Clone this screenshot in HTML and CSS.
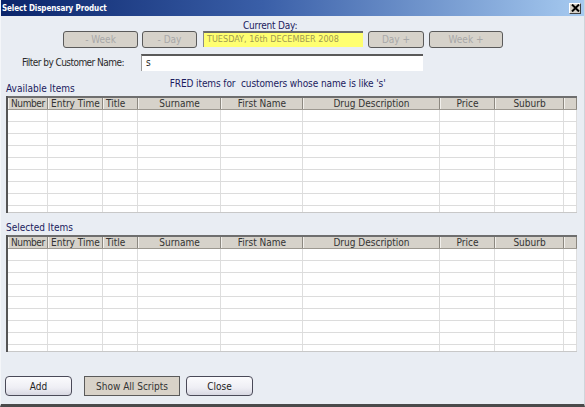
FILE: index.html
```html
<!DOCTYPE html>
<html>
<head>
<meta charset="utf-8">
<link rel="stylesheet" href="styles.css">
</head>
<body>
<div class="window">
  <div class="titlebar">
    <span class="title">Select Dispensary Product</span>
    <span class="close-btn"><svg width="9" height="8" viewBox="0 0 9 8"><path d="M1 0.5 L8 7.5 M8 0.5 L1 7.5" stroke="#000" stroke-width="2"/></svg></span>
  </div>
  <div class="content">
    <div class="day-caption">Current Day:</div>
    <div class="day-row">
      <button class="btn nav b-week-back" disabled>- Week</button>
      <button class="btn nav b-day-back" disabled>- Day</button>
      <div class="date-field">TUESDAY, 16th DECEMBER 2008</div>
      <button class="btn nav b-day-fwd" disabled>Day +</button>
      <button class="btn nav b-week-fwd" disabled>Week +</button>
    </div>
    <div class="filter-row">
      <label class="filter-label">Filter by Customer Name:</label>
      <div class="text-input">s</div>
    </div>
    <div class="info-row">
      <span class="section-label">Available Items</span>
      <span class="info-text">FRED items for &nbsp;customers whose name is like 's'</span>
    </div>
    <div class="grid">
      <div class="grid-head">
        <div class="c c1">Number</div><div class="c c2">Entry Time</div><div class="c c3">Title</div><div class="c c4">Surname</div><div class="c c5">First Name</div><div class="c c6">Drug Description</div><div class="c c7">Price</div><div class="c c8">Suburb</div><div class="c c9"></div>
      </div>
      <div class="grid-body">
        <div class="row"><div class="c c1"></div><div class="c c2"></div><div class="c c3"></div><div class="c c4"></div><div class="c c5"></div><div class="c c6"></div><div class="c c7"></div><div class="c c8"></div><div class="c c9"></div></div>
        <div class="row"><div class="c c1"></div><div class="c c2"></div><div class="c c3"></div><div class="c c4"></div><div class="c c5"></div><div class="c c6"></div><div class="c c7"></div><div class="c c8"></div><div class="c c9"></div></div>
        <div class="row"><div class="c c1"></div><div class="c c2"></div><div class="c c3"></div><div class="c c4"></div><div class="c c5"></div><div class="c c6"></div><div class="c c7"></div><div class="c c8"></div><div class="c c9"></div></div>
        <div class="row"><div class="c c1"></div><div class="c c2"></div><div class="c c3"></div><div class="c c4"></div><div class="c c5"></div><div class="c c6"></div><div class="c c7"></div><div class="c c8"></div><div class="c c9"></div></div>
        <div class="row"><div class="c c1"></div><div class="c c2"></div><div class="c c3"></div><div class="c c4"></div><div class="c c5"></div><div class="c c6"></div><div class="c c7"></div><div class="c c8"></div><div class="c c9"></div></div>
        <div class="row"><div class="c c1"></div><div class="c c2"></div><div class="c c3"></div><div class="c c4"></div><div class="c c5"></div><div class="c c6"></div><div class="c c7"></div><div class="c c8"></div><div class="c c9"></div></div>
        <div class="row"><div class="c c1"></div><div class="c c2"></div><div class="c c3"></div><div class="c c4"></div><div class="c c5"></div><div class="c c6"></div><div class="c c7"></div><div class="c c8"></div><div class="c c9"></div></div>
        <div class="row"><div class="c c1"></div><div class="c c2"></div><div class="c c3"></div><div class="c c4"></div><div class="c c5"></div><div class="c c6"></div><div class="c c7"></div><div class="c c8"></div><div class="c c9"></div></div>
        <div class="row"><div class="c c1"></div><div class="c c2"></div><div class="c c3"></div><div class="c c4"></div><div class="c c5"></div><div class="c c6"></div><div class="c c7"></div><div class="c c8"></div><div class="c c9"></div></div>
      </div>
    </div>
    <div class="section-label selected-label">Selected Items</div>
    <div class="grid">
      <div class="grid-head">
        <div class="c c1">Number</div><div class="c c2">Entry Time</div><div class="c c3">Title</div><div class="c c4">Surname</div><div class="c c5">First Name</div><div class="c c6">Drug Description</div><div class="c c7">Price</div><div class="c c8">Suburb</div><div class="c c9"></div>
      </div>
      <div class="grid-body">
        <div class="row"><div class="c c1"></div><div class="c c2"></div><div class="c c3"></div><div class="c c4"></div><div class="c c5"></div><div class="c c6"></div><div class="c c7"></div><div class="c c8"></div><div class="c c9"></div></div>
        <div class="row"><div class="c c1"></div><div class="c c2"></div><div class="c c3"></div><div class="c c4"></div><div class="c c5"></div><div class="c c6"></div><div class="c c7"></div><div class="c c8"></div><div class="c c9"></div></div>
        <div class="row"><div class="c c1"></div><div class="c c2"></div><div class="c c3"></div><div class="c c4"></div><div class="c c5"></div><div class="c c6"></div><div class="c c7"></div><div class="c c8"></div><div class="c c9"></div></div>
        <div class="row"><div class="c c1"></div><div class="c c2"></div><div class="c c3"></div><div class="c c4"></div><div class="c c5"></div><div class="c c6"></div><div class="c c7"></div><div class="c c8"></div><div class="c c9"></div></div>
        <div class="row"><div class="c c1"></div><div class="c c2"></div><div class="c c3"></div><div class="c c4"></div><div class="c c5"></div><div class="c c6"></div><div class="c c7"></div><div class="c c8"></div><div class="c c9"></div></div>
        <div class="row"><div class="c c1"></div><div class="c c2"></div><div class="c c3"></div><div class="c c4"></div><div class="c c5"></div><div class="c c6"></div><div class="c c7"></div><div class="c c8"></div><div class="c c9"></div></div>
        <div class="row"><div class="c c1"></div><div class="c c2"></div><div class="c c3"></div><div class="c c4"></div><div class="c c5"></div><div class="c c6"></div><div class="c c7"></div><div class="c c8"></div><div class="c c9"></div></div>
        <div class="row"><div class="c c1"></div><div class="c c2"></div><div class="c c3"></div><div class="c c4"></div><div class="c c5"></div><div class="c c6"></div><div class="c c7"></div><div class="c c8"></div><div class="c c9"></div></div>
        <div class="row"><div class="c c1"></div><div class="c c2"></div><div class="c c3"></div><div class="c c4"></div><div class="c c5"></div><div class="c c6"></div><div class="c c7"></div><div class="c c8"></div><div class="c c9"></div></div>
      </div>
    </div>
    <div class="action-row">
      <button class="btn action b-add">Add</button>
      <button class="btn flat b-scripts">Show All Scripts</button>
      <button class="btn action b-close">Close</button>
    </div>
  </div>
</div>
</body>
</html>
```
FILE: styles.css
```css
* { box-sizing: border-box; }

html, body {
  margin: 0;
  padding: 0;
  width: 585px;
  height: 407px;
  overflow: hidden;
  background: #e9edf3;
  font-family: "DejaVu Sans Condensed", "DejaVu Sans", sans-serif;
  font-size: 10px;
  color: #2a2a2a;
}

.window {
  width: 585px;
  height: 407px;
  display: flex;
  flex-direction: column;
  border-left: 1px solid #f4f6f9;
  border-right: 1px solid #d0d4da;
  border-bottom: 3px solid #4a4a4a;
}

/* caption bar */
.titlebar {
  height: 16px;
  flex: none;
  display: flex;
  align-items: center;
  justify-content: space-between;
  padding: 0 3px 0 1px;
  background: linear-gradient(to right, #0a246a 0%, #3a5fa8 45%, #a6caf0 100%);
}

.title {
  color: #fff;
  font-weight: bold;
  font-size: 8px;
  letter-spacing: -0.1px;
}

.close-btn {
  width: 12px;
  height: 11px;
  background: #d4d0c8;
  border: 1px solid;
  border-color: #fff #404040 #404040 #fff;
  display: flex;
  align-items: center;
  justify-content: center;
}

.content {
  flex: 1;
  display: flex;
  flex-direction: column;
  padding: 4px 8px 0 4px;
}

/* day navigation */
.day-caption {
  height: 12px;
  line-height: 12px;
  padding-left: 238px;
  color: #1b1b5e;
  letter-spacing: -0.2px;
}

.day-row {
  display: flex;
  height: 17px;
  margin-top: -1px;
  padding-left: 58px;
}

.btn {
  font-family: inherit;
  font-size: 10px;
  padding: 0;
  height: 17px;
  border-radius: 3px;
}

.nav {
  background: #d6d2ca;
  border: 1px solid #5a5a5a;
  color: #a8a8a8;
}

.b-week-back { width: 75px; margin-right: 4px; }
.b-day-back { width: 55px; margin-right: 6px; }
.b-day-fwd { width: 56px; margin-right: 5px; }
.b-week-fwd { width: 74px; }

.date-field {
  width: 160px;
  height: 16px;
  margin-right: 5px;
  background: #ffff70;
  border-top: 2px solid #6b6b6b;
  border-left: 1px solid #8a8a8a;
  color: #a09a50;
  font-size: 9px;
  line-height: 13px;
  padding-left: 3px;
}

/* filter */
.filter-row {
  display: flex;
  align-items: center;
  margin-top: 6px;
  height: 17px;
}

.filter-label {
  width: 136px;
  padding-left: 17px;
  letter-spacing: -0.55px;
}

.text-input {
  width: 282px;
  height: 17px;
  background: #fff;
  border-top: 2px solid #5a5a5a;
  border-left: 1px solid #9a9a9a;
  padding-left: 4px;
  line-height: 14px;
}

.info-row {
  display: flex;
  align-items: flex-start;
  margin-top: 7px;
  height: 18px;
}

.section-label {
  color: #1b1b5e;
  padding-left: 1px;
}

.info-row .section-label {
  padding-top: 5px;
}

.info-text {
  margin-left: 95px;
  color: #1b1b5e;
  letter-spacing: -0.1px;
}

.selected-label {
  height: 14px;
  margin-top: 8px;
  line-height: 14px;
}

/* item grids */
.grid {
  width: 571px;
  margin-left: 1px;
  display: flex;
  flex-direction: column;
  border-left: 2px solid #555;
}

.grid-head {
  display: flex;
  height: 14px;
  background: #d6d2ca;
  border-top: 2px solid #6e6e6e;
  border-bottom: 1px solid #9c9890;
}

.grid-head .c {
  border-right: 1px solid #8c8880;
  border-left: 1px solid #f2f0ec;
  line-height: 11px;
  text-align: center;
  color: #333;
  white-space: nowrap;
  overflow: hidden;
}

.grid-head .c1,
.grid-head .c2,
.grid-head .c3 { text-align: left; padding-left: 2px; }

.grid-head .c1 { letter-spacing: -0.4px; }

.grid-body {
  height: 103px;
  overflow: hidden;
  background: #fff;
  border-bottom: 1px solid #c8c8c8;
}

.row {
  display: flex;
  height: 12px;
  border-bottom: 1px solid #dcdcdc;
}

.row .c {
  border-right: 1px solid #dedede;
}

.c1 { width: 40px; }
.c2 { width: 55px; }
.c3 { width: 35px; }
.c4 { width: 83px; }
.c5 { width: 82px; }
.c6 { width: 137px; }
.c7 { width: 55px; }
.c8 { width: 69px; }
.c9 { width: 13px; }

/* bottom actions */
.action-row {
  display: flex;
  margin-top: 24px;
  height: 20px;
}

.action {
  width: 67px;
  height: 20px;
  background: linear-gradient(to bottom, #fbfbfd 0%, #eeeef4 60%, #d8d8e2 100%);
  border: 1px solid #4a4a58;
  color: #222;
  border-radius: 4px;
}

.flat {
  width: 96px;
  height: 20px;
  margin: 0 6px 0 12px;
  background: #d8d2c8;
  border: 1px solid #5a5a5a;
  border-radius: 0;
  color: #333;
}
```
